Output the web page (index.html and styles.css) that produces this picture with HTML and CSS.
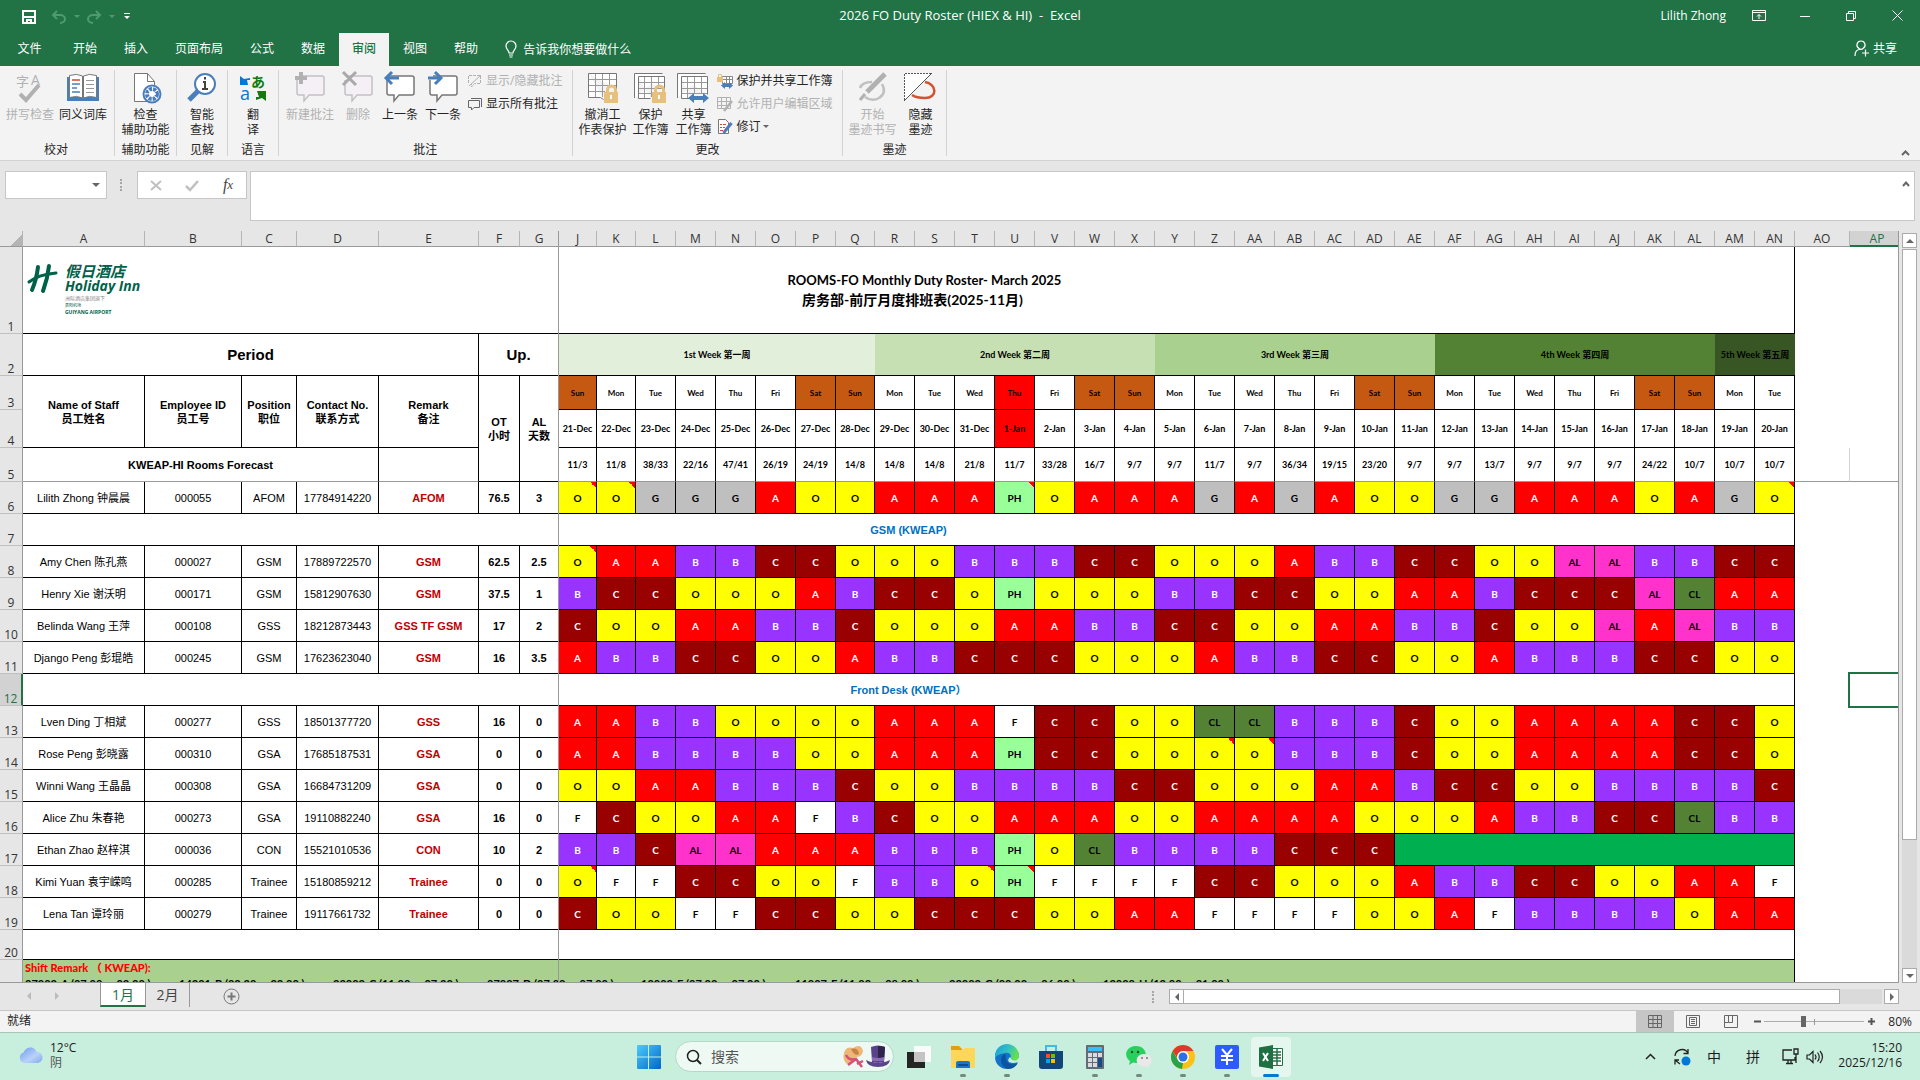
FILE: index.html
```html
<!DOCTYPE html>
<html lang="zh-CN">
<head>
<meta charset="utf-8">
<title>2026 FO Duty Roster (HIEX &amp; HI) - Excel</title>
<meta name="viewport" content="width=device-width, initial-scale=1">
<link rel="stylesheet" href="styles.css">
</head>
<body>
<header class="titlebar">
  <div class="quick">
    <button class="quick-save" aria-label="保存"><svg width="14" height="14" viewBox="0 0 14 14"><path fill="none" stroke="#fff" stroke-width="2" d="M1 1h12v12H1zM2 7h10"/><path fill="#fff" d="M4 9h6v4H8v-2H6v2H4z"/></svg></button>
    <button class="quick-undo" aria-label="撤消"><svg width="16" height="14" viewBox="0 0 16 14"><path fill="none" stroke="#4f9a70" stroke-width="2" d="M6 1L2 5l4 4M2 5h7c3 0 5 2 5 4s-2 4-5 4"/></svg><i class="tri"></i></button>
    <button class="quick-undo" aria-label="重做"><svg width="16" height="14" viewBox="0 0 16 14"><path fill="none" stroke="#4f9a70" stroke-width="2" d="M10 1l4 4-4 4M14 5H7C4 5 2 7 2 9s2 4 5 4"/></svg><i class="tri"></i></button>
    <button class="quick-more" aria-label="自定义"><svg width="6" height="7" viewBox="0 0 6 7"><path fill="#fff" d="M0 0h6v1H0zM0 3h6L3 6z"/></svg></button>
  </div>
  <h1 class="doc-title">2026 FO Duty Roster (HIEX &amp; HI)&nbsp; -&nbsp; Excel</h1>
  <div class="window-tools">
    <span class="user">Lilith Zhong</span>
    <button aria-label="功能区显示选项"><svg width="14" height="11" viewBox="0 0 14 11"><path fill="none" stroke="#fff" d="M.5.5h13v10H.5zM0 2.500h14M7 9V4.500M5 6.500l2-2 2 2"/></svg></button>
    <button aria-label="最小化"><svg width="10" height="10" viewBox="0 0 10 10"><path stroke="#fff" d="M0 5.500h10"/></svg></button>
    <button aria-label="还原"><svg width="10" height="10" viewBox="0 0 10 10"><path fill="none" stroke="#fff" d="M.5 2.500h7v7h-7zM2.500 2V.5h7v7H8"/></svg></button>
    <button aria-label="关闭"><svg width="11" height="11" viewBox="0 0 11 11"><path stroke="#fff" d="M.5.5l10 10M10.500.5l-10 10"/></svg></button>
  </div>
</header>
<nav class="tabs">
  <button class="tab tab-file">文件</button><button class="tab">开始</button><button class="tab">插入</button><button class="tab">页面布局</button><button class="tab">公式</button><button class="tab">数据</button><button class="tab tab-active">审阅</button><button class="tab">视图</button><button class="tab">帮助</button>
  <button class="tell-me"><svg width="12" height="17" viewBox="0 0 12 17"><path fill="none" stroke="#fff" stroke-width="1.200" d="M4 12c0-3-3-3.500-3-7a5 5 0 0 1 10 0c0 3.500-3 4-3 7zM4 14h4M4.500 16h3"/></svg>告诉我你想要做什么</button>
  <button class="share"><svg width="15" height="17" viewBox="0 0 15 17"><path fill="none" stroke="#fff" stroke-width="1.200" d="M7 1a4 4 0 0 1 2 7.500c-1 .8-3 .8-4 0A4 4 0 0 1 7 1zM1 16c0-4 2-6.500 5-6.500M8 13h7M11.500 9.500v7"/></svg>共享</button>
</nav>
<section class="ribbon" aria-label="审阅">
  <div class="group group-wide group-first">
    <div class="tools">
      <button class="big w54" disabled><svg width="32" height="32" viewBox="0 0 32 32"><text x="2" y="14" font-size="13" fill="#b1b1b1">字</text><text x="17" y="13" font-size="14" fill="#b1b1b1">A</text><path fill="none" stroke="#b1b1b1" stroke-width="4" d="M6 22l6 6 13-15"/></svg>拼写检查</button>
      <button class="big w52"><svg width="32" height="32" viewBox="0 0 32 32"><path fill="#4a7ebb" d="M0 5h3v20h26V5h3v24H0z"/><path fill="#fff" stroke="#777" d="M2.500 3.500Q10 1 15.500 4v22Q10 23 2.500 25.500zM29.500 3.500Q22 1 16.500 4v22q5.500-3 13-.5z"/><path stroke="#cf4b32" stroke-width="1.500" d="M5 8h8"/><path stroke="#4a7ebb" stroke-width="1.500" d="M5 12h8M5 16h5M5 20h8"/><path stroke="#999" d="M19 8.500h8M19 12.500h8M19 16.500h8M19 20.500h8"/></svg>同义词库</button>
    </div><h2>校对</h2>
  </div>
  <div class="group"><div class="tools">
      <button class="big w61"><svg width="32" height="32" viewBox="0 0 32 32"><path fill="#fff" stroke="#777" d="M4.500 1.500h13l7 8v20h-20z"/><path fill="none" stroke="#777" d="M17.500 1.500v8h7"/><circle cx="22" cy="22" r="8.500" fill="#fff" stroke="#4a7ebb" stroke-width="2"/><circle cx="22" cy="22" r="5" fill="none" stroke="#4a7ebb" stroke-width="4" stroke-dasharray="3 1"/><path fill="none" stroke="#fff" stroke-width="1.500" d="M19 19l3 3h4"/></svg>检查<br>辅助功能</button>
    </div><h2>辅助功能</h2></div>
  <div class="group"><div class="tools">
      <button class="big w50"><svg width="32" height="32" viewBox="0 0 32 32"><path stroke="#4a7ebb" stroke-width="5" d="M12 19L3 28"/><circle cx="19" cy="12" r="10" fill="#fff" stroke="#4a7ebb" stroke-width="2"/><path fill="none" stroke="#444" stroke-width="2" d="M17 10h2v7M16 17h6M19 5v2.500"/></svg>智能<br>查找</button>
    </div><h2>见解</h2></div>
  <div class="group"><div class="tools">
      <button class="big w50"><svg width="32" height="32" viewBox="0 0 32 32"><path fill="#0078d7" d="M3 4l4 3 6-1v2h-3l1 5H3z"/><path fill="#107c10" d="M29 29l-4-3-6 2v-3h3l-2-6h9z"/><text x="14" y="15" font-size="14" font-weight="bold" fill="#107c10">あ</text><text x="3" y="28" font-size="18" fill="#0078d7">a</text></svg>翻<br>译</button>
    </div><h2>语言</h2></div>
  <div class="group group-wide">
    <div class="tools">
      <button class="big w56" disabled><svg width="32" height="32" viewBox="0 0 32 32"><path fill="#f4f0f6" stroke="#c4c0c6" stroke-width="1.500" d="M6 4h22q2 0 2 2v15q0 2-2 2H15l-5 6v-6H5q-2 0-2-2V8"/><path stroke="#b1b1b1" stroke-width="4" d="M7 0v12M1 6h12"/></svg>新建批注</button>
      <button class="big w40" disabled><svg width="32" height="32" viewBox="0 0 32 32"><path fill="#f4f0f6" stroke="#c4c0c6" stroke-width="1.500" d="M6 4h22q2 0 2 2v15q0 2-2 2H15l-5 6v-6H5q-2 0-2-2V8"/><path stroke="#a9a9a9" stroke-width="3" d="M1 0l13 13M14 0L1 13"/></svg>删除</button>
      <button class="big w44"><svg width="32" height="32" viewBox="0 0 32 32"><path fill="#fff" stroke="#777" stroke-width="1.500" d="M6 4h22q2 0 2 2v15q0 2-2 2H15l-5 6v-6H5q-2 0-2-2V8"/><path fill="none" stroke="#4a7ebb" stroke-width="3" d="M8 0L2 6l6 6M3 6h12"/></svg>上一条</button>
      <button class="big w42"><svg width="32" height="32" viewBox="0 0 32 32"><path fill="#fff" stroke="#777" stroke-width="1.500" d="M6 4h22q2 0 2 2v15q0 2-2 2H15l-5 6v-6H5q-2 0-2-2V8"/><path fill="none" stroke="#4a7ebb" stroke-width="3" d="M8 0l6 6-6 6M1 6h12"/></svg>下一条</button>
      <div class="stack">
        <button class="small" disabled><svg width="16" height="16" viewBox="0 0 16 16"><path fill="none" stroke="#b1b1b1" d="M1.500 10V2.500h12v8h-6L4.500 14v-3" stroke-dasharray="3 1"/><path stroke="#b1b1b1" d="M2 13L14 2"/></svg>显示/隐藏批注</button>
        <button class="small"><svg width="16" height="16" viewBox="0 0 16 16"><path fill="none" stroke="#666" d="M4 2.500h10.500V11M2 4.500h10.500v7H7L4.500 14v-2.500H1.500v-7z"/></svg>显示所有批注</button>
      </div>
    </div><h2>批注</h2>
  </div>
  <div class="group group-wide">
    <div class="tools">
      <button class="big w52"><svg width="32" height="32" viewBox="0 0 32 32"><path fill="#fff" stroke="#777" d="M2.500 1.500h28v16M2.500 1.500v24h12l3 2"/><path stroke="#999" d="M9.500 2v23M16.500 2v23M23.500 2v14M3 7.500h27M3 13.500h27M3 19.500h16"/><path fill="none" stroke="#e8c07d" stroke-width="3" d="M21.500 22v-4a4 4 0 0 1 8 0v4"/><path fill="#e8c07d" d="M18 20h14v11H18z"/><path stroke="#fff" stroke-width="2" d="M25 23v4"/></svg>撤消工<br>作表保护</button>
      <button class="big w44"><svg width="32" height="32" viewBox="0 0 32 32"><path fill="#fff" stroke="#777" d="M.5 26V1.500h28M4.500 4.500h26v14M4.500 4.500v22h12"/><path stroke="#999" d="M10.500 5v21M17.500 5v20M24.500 5v12M5 10.500h25M5 16.500h25M5 21.500h14"/><path fill="none" stroke="#e8c07d" stroke-width="3" d="M21.500 22v-4a4 4 0 0 1 8 0v4"/><path fill="#e8c07d" d="M18 20h14v11H18z"/><path stroke="#fff" stroke-width="2" d="M25 23v4"/></svg>保护<br>工作簿</button>
      <button class="big w42"><svg width="32" height="32" viewBox="0 0 32 32"><path fill="#fff" stroke="#777" d="M.5 26V1.500h28M4.500 4.500h26v18M4.500 4.500v22h8"/><path stroke="#999" d="M10.500 5v21M17.500 5v17M24.500 5v17M5 10.500h25M5 16.500h25M5 21.500h25"/><path fill="#4a7ebb" d="M11 26l6-5v3h9v-3l6 5-6 5v-3h-9v3z"/></svg>共享<br>工作簿</button>
      <div class="stack">
        <button class="small"><svg width="16" height="16" viewBox="0 0 16 16"><path fill="#fff" stroke="#888" d="M5.500 3.500h10v7h-10zM9.500 3v8M12.500 3v8M5 6.500h10"/><path fill="#e8c07d" d="M0 4h6v5H0z"/><path fill="none" stroke="#e8c07d" d="M1.500 4V1.500h3V4"/><path fill="#4a7ebb" d="M4 12.500L8 9v2h4V9l4 3.500L12 16v-2H8v2z"/></svg>保护并共享工作簿</button>
        <button class="small" disabled><svg width="16" height="16" viewBox="0 0 16 16"><path fill="none" stroke="#b1b1b1" d="M.5 1.500h13v11H.5zM4.500 1v11M9.500 1v11M0 5.500h14M0 9.500h13"/><path stroke="#b1b1b1" stroke-width="2.500" d="M15 5l-8 10"/></svg>允许用户编辑区域</button>
        <button class="small"><svg width="16" height="16" viewBox="0 0 16 16"><path fill="#fff" stroke="#777" d="M1.500.5h7l3 3v11h-10z"/><path stroke="#cf4b32" d="M3 5.500h2M6 5.500h3M3 8.500h2M6 8.500h2M3 11.500h3"/><path stroke="#4a7ebb" stroke-width="3" d="M14.500 4l-8 10"/></svg>修订<i class="tri tri-dark"></i></button>
      </div>
    </div><h2>更改</h2>
  </div>
  <div class="group group-wide">
    <div class="tools">
      <button class="big w52" disabled><svg width="32" height="32" viewBox="0 0 32 32"><path fill="none" stroke="#c0c0c0" stroke-width="2.500" d="M4 16q2-6 12-6M26 12q5 9-3 14-7 4-14-1"/><path fill="none" stroke="#b1b1b1" stroke-width="5" d="M29 2L11 20"/><path stroke="#b1b1b1" stroke-width="3" d="M9 22l-5 6"/></svg>开始<br>墨迹书写</button>
      <button class="big w44"><svg width="32" height="32" viewBox="0 0 32 32"><path fill="none" stroke="#d35230" stroke-width="2.500" d="M21 10c12 2 13 16 0 16-7 0-10-1-13-3"/><path fill="#fff" d="M0 1h28L0 29z"/><path fill="none" stroke="#555" stroke-dasharray="2 1" d="M.5 28V1.500H28"/><path stroke="#555" d="M28 1L0 29"/></svg>隐藏<br>墨迹</button>
    </div><h2>墨迹</h2>
  </div>
  <button class="collapse" aria-label="折叠功能区"><svg width="9" height="6" viewBox="0 0 9 6"><path fill="none" stroke="#666" stroke-width="2" d="M1 5l3.500-3.500L8 5"/></svg></button>
</section>
<section class="formula-bar">
  <div class="name-box"><input aria-label="名称框"><i class="tri tri-dark"></i></div>
  <span class="grip"></span>
  <div class="fx-box">
    <button aria-label="取消"><svg width="12" height="11" viewBox="0 0 12 11"><path stroke="#c0c0c0" stroke-width="2" d="M1 1l10 9M11 1L1 10"/></svg></button>
    <button aria-label="输入"><svg width="14" height="11" viewBox="0 0 14 11"><path fill="none" stroke="#c0c0c0" stroke-width="2.500" d="M1 6l4 4 8-9"/></svg></button>
    <button class="fx" aria-label="插入函数">f<small>x</small></button>
  </div>
  <div class="formula"><textarea aria-label="编辑栏"></textarea><button aria-label="折叠编辑栏"><svg width="8" height="6" viewBox="0 0 8 6"><path fill="none" stroke="#666" stroke-width="2" d="M1 5l3-3.500L7 5"/></svg></button></div>
</section>
<main class="workspace">
  <div class="sheet">
    <table class="grid" id="roster"></table>
    <div class="logo">
      <svg width="31" height="29" viewBox="0 0 31 29"><path fill="none" stroke="#006149" stroke-linecap="round" d="M11 3C10 11 8 19 5 26" stroke-width="4"/><path fill="none" stroke="#006149" stroke-linecap="round" d="M22 2C21 11 19 19 16 27" stroke-width="4"/><path fill="none" stroke="#006149" stroke-linecap="round" d="M2 18C9 12 19 10 29 9" stroke-width="3"/></svg>
      <div class="logo-text"><b>假日酒店</b><b class="logo-en">Holiday Inn</b><span>洲际酒店集团旗下</span><small>贵阳机场</small><small class="logo-city">GUIYANG AIRPORT</small></div>
    </div>
    <i class="freeze"></i>
  </div>
  <div class="vscroll"><button aria-label="向上"><i class="up"></i></button><div class="vthumb"></div><div class="vtrack"></div><button aria-label="向下"><i class="down"></i></button></div>
</main>
<div class="sheet-bar">
  <button class="nav-arrow" aria-label="上一张"><i class="left"></i></button><button class="nav-arrow" aria-label="下一张"><i class="right"></i></button>
  <div class="sheet-tabs"><button class="sheet-tab sheet-on">1月</button><button class="sheet-tab">2月</button></div>
  <button class="add-sheet" aria-label="新工作表"><svg width="17" height="17" viewBox="0 0 17 17"><circle cx="8.500" cy="8.500" r="7.500" fill="none" stroke="#777"/><path stroke="#777" stroke-width="2" d="M8.500 4.500v8M4.500 8.500h8"/></svg></button>
  <span class="grip grip-end"></span>
  <div class="hscroll"><button aria-label="向左"><i class="left"></i></button><div class="hthumb"></div><div class="htrack"></div><button aria-label="向右"><i class="right"></i></button></div>
</div>
<div class="status">
  <span class="ready">就绪</span>
  <button class="view view-on" aria-label="普通"><svg width="14" height="13" viewBox="0 0 14 13"><path fill="none" stroke="#666" d="M.5.5h13v12H.5zM5 0v13M9.500 0v13M0 4.500h14M0 8.500h14"/></svg></button>
  <button class="view" aria-label="页面布局"><svg width="14" height="13" viewBox="0 0 14 13"><path fill="none" stroke="#666" d="M.5.5h13v12H.5zM3.500 2.500h7v8h-7zM5 4.500h4M5 6.500h4M5 8.500h4"/></svg></button>
  <button class="view" aria-label="分页预览"><svg width="14" height="13" viewBox="0 0 14 13"><path fill="none" stroke="#666" d="M.5.5h13v12H.5zM4.500 0v7.500H0M8.500 0v7.500h-4"/></svg></button>
  <button class="zoom-btn" aria-label="缩小"><svg width="7" height="7" viewBox="0 0 7 7"><path stroke="#555" stroke-width="2" d="M0 3.500h7"/></svg></button>
  <input class="zoom" type="range" min="0" max="100" value="39" aria-label="显示比例">
  <button class="zoom-btn" aria-label="放大"><svg width="7" height="7" viewBox="0 0 7 7"><path stroke="#555" stroke-width="2" d="M0 3.500h7M3.500 0v7"/></svg></button>
  <span class="percent">80%</span>
</div>
<footer class="taskbar">
  <div class="weather">
    <svg width="25" height="17" viewBox="0 0 25 17"><defs><linearGradient id="cloud" x1="0" y1="0" x2="1" y2="1"><stop offset="0" stop-color="#6d9cec"/><stop offset=".6" stop-color="#b9d2fa"/><stop offset="1" stop-color="#7fa6ec"/></linearGradient></defs><path fill="url(#cloud)" d="M6 16a5.500 5.500 0 0 1-.5-10.500C7 2 9.500.5 12.500.5c4 0 5.500 2.500 6 4.500 4 0 6 2.500 6 5.500S22 16 19 16z"/></svg>
    <div>12°C<br><span>阴</span></div>
  </div>
  <div class="apps">
    <button class="app" aria-label="开始"><svg width="24" height="24" viewBox="0 0 24 24"><defs><linearGradient id="win" x1="0" y1="0" x2="1" y2="1"><stop offset="0" stop-color="#4ccbfb"/><stop offset="1" stop-color="#0067c8"/></linearGradient></defs><path fill="url(#win)" d="M0 1q0-1 1-1h10v11.500H0zM12 0h11q1 0 1 1v10.500H12zM0 12.500h11V24H1q-1 0-1-1zM12 12.500h12V23q0 1-1 1H12z"/></svg></button>
    <label class="search"><svg width="16" height="16" viewBox="0 0 16 16"><circle cx="7" cy="7" r="5.500" fill="none" stroke="#222" stroke-width="1.500"/><path stroke="#222" stroke-width="2" d="M11 11l4 4"/></svg><input type="text" placeholder="搜索" aria-label="搜索">
      <svg width="48" height="24" viewBox="0 0 48 24"><path fill="#edb877" d="M2 8Q4 1 11 3q8-5 10 3-1 6-7 6-4 6-9 7-5-4-3-11z"/><path fill="#c98144" d="M9 4q7-2 8 5-4 3-8-5z"/><path fill="none" stroke="#d65078" stroke-width="2.500" d="M4 10q3 6 10 4M6 20l8-6 6 8M15 19l6-3"/><path fill="#58438a" d="M29 2q7-3 14 0l-1 15H30z"/><path fill="#2f244b" d="M36 1q4 0 7 1l-1 14h-6z"/><path fill="#8c6bb5" d="M30 12q6 2 12 0v4H30z"/><path fill="#5a458b" d="M24 15q5 3 12 2 7 1 12-2-1 7-12 7t-12-7z"/></svg></label>
    <button class="app" aria-label="任务视图"><svg width="24" height="24" viewBox="0 0 24 24"><path fill="#242424" d="M0 7h18v16H0z"/><path fill="#fafafa" d="M7 1h17v16H7z"/><path fill="#c4c4c4" d="M7 7h11v10H7z"/></svg></button>
    <button class="app run" aria-label="文件资源管理器"><svg width="26" height="24" viewBox="0 0 26 24"><path fill="#e0a012" d="M1 1h8l3 3v6H1z"/><path fill="#ffd65c" d="M1 5h11l3-2h10v20H1z"/><path fill="#1976c9" d="M6 23v-5q0-2 2-2h10q2 0 2 2v5z"/><path fill="#0c4d91" d="M8 19h10v2H8z"/></svg></button>
    <button class="app run" aria-label="Edge"><svg width="24" height="24" viewBox="0 0 24 24"><defs><linearGradient id="edge" x1="0" y1="0" x2="1" y2=".4"><stop offset="0" stop-color="#189bdc"/><stop offset=".6" stop-color="#35c2c0"/><stop offset="1" stop-color="#66de50"/></linearGradient></defs><circle cx="12" cy="12" r="12" fill="#1173c9"/><path fill="url(#edge)" d="M0 11A12 12 0 0 1 24 11c0 5-4 6-7 6s-4-2-2-4 0-6-5-5S1 10 0 14z"/><path fill="#0b55a0" d="M9 9c-5 3-4 13 4 15 5 0 8-3 10-6-5 3-14 1-12-8z"/><path fill="#c8eedd" d="M15 12q-3 3-1 5 4 2 9 0v2l2-8-3 4q-5 2-7-3z"/></svg></button>
    <button class="app" aria-label="Microsoft Store"><svg width="24" height="24" viewBox="0 0 24 24"><path fill="none" stroke="#43b8ee" stroke-width="2" d="M7 6V1h10v5"/><path fill="#124678" d="M0 6h24v15q0 3-3 3H3q-3 0-3-3z"/><path fill="#f25022" d="M7 9h4v4H7z"/><path fill="#7fba00" d="M12 9h4v4h-4z"/><path fill="#00a4ef" d="M7 14h4v4H7z"/><path fill="#ffb900" d="M12 14h4v4h-4z"/></svg></button>
    <button class="app run" aria-label="计算器"><svg width="20" height="24" viewBox="0 0 20 24"><rect width="18" height="24" x="1" rx="1" fill="#626b76"/><path fill="#38c0f4" d="M3 2h14v4H3z"/><path fill="#d8dbe0" d="M3 8h4v4H3zM8 8h4v4H8zM13 8h4v4h-4zM3 13h4v4H3zM8 13h4v4H8zM3 18h4v4H3zM8 18h4v4H8z"/><path fill="#174b86" d="M13 13h4v9h-4z"/></svg></button>
    <button class="app run" aria-label="微信"><svg width="26" height="22" viewBox="0 0 26 22"><path fill="#28d05e" d="M10 0c13 0 13 17 0 17l-3-.5L3 19l1-4C-3 10 0 0 10 0z"/><circle cx="6" cy="6" r="1.200" fill="#174b2c"/><circle cx="12" cy="6" r="1.200" fill="#174b2c"/><path fill="#e9e9e9" d="M18 8c9 0 10 9 4 12l1 2-3-1.500c-12 1-12-12.500-2-12.500z"/><circle cx="16" cy="12" r="1" fill="#777"/><circle cx="21" cy="12" r="1" fill="#777"/></svg></button>
    <button class="app run" aria-label="Chrome"><svg width="24" height="24" viewBox="0 0 24 24"><circle cx="12" cy="12" r="12" fill="#fbc116"/><path fill="#de3a2b" d="M1.600 6A12 12 0 0 1 22.400 6H12L7 14z"/><path fill="#2aa24c" d="M1.600 6L7 15l5 3-1 6A12 12 0 0 1 1.600 6z"/><circle cx="12" cy="12" r="6" fill="#fff"/><circle cx="12" cy="12" r="4.500" fill="#2b70e4"/></svg></button>
    <button class="app run" aria-label="财务"><svg width="24" height="24" viewBox="0 0 24 24"><rect width="24" height="24" rx="2" fill="#2d5bff"/><path fill="none" stroke="#fff" stroke-width="2" d="M7 4l5 6 5-6M6 11h12M6 15h12M12 10v10"/></svg></button>
    <button class="app app-on" aria-label="Excel"><svg width="24" height="24" viewBox="0 0 24 24"><path fill="#fff" stroke="#217346" d="M12 3.500h11.500v17H12z"/><path stroke="#217346" stroke-width="1.500" d="M14 7h8M14 10h8M14 13h8M14 16h8M18 4v16"/><path fill="#1e6f42" d="M0 2.500L14 0v24L0 21.500z"/><path stroke="#fff" stroke-width="2" d="M4 8l5 8M9 8l-5 8"/></svg></button>
  </div>
  <div class="tray">
    <button class="t32" aria-label="显示隐藏的图标"><svg width="11" height="7" viewBox="0 0 11 7"><path fill="none" stroke="#222" stroke-width="1.500" d="M1 6l4.500-4.500L10 6"/></svg></button>
    <button class="t32" aria-label="更新"><svg width="18" height="18" viewBox="0 0 18 18"><path fill="none" stroke="#222" stroke-width="1.300" d="M2 8a7 7 0 0 1 13-3M15 1v4.500h-4.500M7 16L2 12M2 16.500V12h4"/><circle cx="13" cy="13" r="4.500" fill="#0078d7"/></svg></button>
    <button class="t32">中</button>
    <button class="t46">拼</button>
    <button class="t28" aria-label="网络"><svg width="17" height="17" viewBox="0 0 17 17"><path fill="none" stroke="#222" stroke-width="1.300" d="M10 2H1v10h12V9M4 15.500h7M6 12v3.500M9 12v3.500M12 1h4v5h-4zM14 6v9"/></svg></button>
    <button class="t22" aria-label="音量"><svg width="18" height="14" viewBox="0 0 18 14"><path fill="none" stroke="#222" stroke-width="1.200" d="M1 5h2.500L7 1.500v11L3.500 9H1zM9 4.500q2 2.500 0 5M11.500 2.500q3.500 4.500 0 9M14 1q5 6 0 12"/></svg></button>
    <div class="clock">15:20<br>2025/12/16</div>
  </div>
</footer>
<script src="roster.js"></script>
</body>
</html>
```
FILE: styles.css
```css
* { box-sizing: border-box; }
body {
  margin: 0;
  height: 100vh;
  display: flex;
  flex-direction: column;
  overflow: hidden;
  background: #e6e6e6;
  color: #262626;
  font: 12px/15px "Open Sans", "Noto Sans CJK SC", sans-serif;
}
button, input, textarea { font: inherit; color: inherit; border: 0; padding: 0; margin: 0; background: none; outline: none; }
button { display: flex; align-items: center; justify-content: center; white-space: nowrap; }
h1, h2 { margin: 0; font-size: 12px; font-weight: normal; }
svg { flex: none; display: block; overflow: visible; }

/* small triangles */
.tri, .up, .down, .left, .right { display: block; width: 0; height: 0; border: 4px solid transparent; }
.tri { border-width: 3px 3px 0; border-top-color: #4f9a70; }
.tri-dark { border-width: 4px 4px 0; border-top-color: #666; }
.up { border-width: 0 4px 4px; border-bottom-color: #666; }
.down { border-width: 4px 4px 0; border-top-color: #666; }
.left { border-width: 4px 4px 4px 0; border-right-color: #666; }
.right { border-width: 4px 0 4px 4px; border-left-color: #666; }

/* title bar */
.titlebar {
  flex: none;
  display: grid;
  grid-template-columns: 1fr auto 1fr;
  align-items: center;
  height: 33px;
  padding-bottom: 2px;
  background: #217346;
  color: #fff;
}
.doc-title { font-size: 13px; }
.quick { display: flex; align-items: center; padding: 2px 0 0 22px; }
.quick-undo { gap: 7px; width: 35px; }
.quick-save { margin-right: 12px; }
.quick-more { margin-left: 6px; }
.window-tools { display: flex; justify-content: flex-end; align-items: center; }
.window-tools button { width: 46px; height: 30px; }
.user { margin-right: 10px; }

/* ribbon tabs */
.tabs { flex: none; display: flex; align-items: stretch; gap: 1px; height: 33px; background: #217346; color: #fff; }
.tab { padding: 0 13px 2px; }
.tab-file { width: 59px; }
.tab-active { background: #f3f3f3; color: #217346; font-weight: 500; }
.tell-me { gap: 6px; margin-left: 13px; }
.share { gap: 4px; margin: 0 23px 2px auto; }

/* ribbon */
.ribbon { flex: none; display: flex; height: 95px; padding: 4px 0; background: #f3f3f3; border-bottom: 1px solid #d2d2d2; }
.group { display: flex; flex-direction: column; border-right: 1px solid #d2d2d2; }
.group-wide { padding: 0 4px 0 3px; }
.group-first { padding-right: 5px; }
.group h2 { margin-top: auto; text-align: center; line-height: 13px; }
.tools { display: flex; align-items: flex-start; }
.big { flex-direction: column; justify-content: flex-start; gap: 3px; padding-top: 2px; text-align: center; }
.big:disabled, .small:disabled { color: #b1b1b1; }
.w40 { width: 40px; } .w42 { width: 42px; } .w44 { width: 44px; } .w50 { width: 50px; }
.w52 { width: 52px; } .w54 { width: 54px; } .w56 { width: 56px; } .w61 { width: 61px; }
.stack { display: flex; flex-direction: column; align-items: flex-start; padding: 0 6px 0 3px; }
.small { gap: 3px; height: 23px; padding-bottom: 2px; }
.small .tri { border-width: 3px 3px 0; }
.collapse { align-self: flex-end; margin: 0 10px 0 auto; }

/* formula bar */
.formula-bar { flex: none; display: flex; align-items: flex-start; height: 70px; padding: 10px 5px 10px; }
.name-box, .fx-box, .formula { display: flex; background: #fff; border: 1px solid #c6c6c6; }
.name-box { width: 102px; height: 28px; align-items: center; padding-right: 6px; }
.name-box input { flex: 1; min-width: 0; }
.grip { width: 3px; height: 12px; margin: 8px 14px 0 13px; border-left: 2px dotted #a6a6a6; }
.fx-box { width: 110px; height: 28px; }
.fx-box button { flex: 1; }
.fx-box .fx { font: italic 16px "Liberation Serif", serif; color: #444; }
.fx small { font-size: 13px; }
.formula { flex: 1; height: 50px; margin-left: 3px; }
.formula textarea { flex: 1; resize: none; }
.formula button { width: 16px; height: 24px; }

/* worksheet */
.workspace { flex: 1; min-height: 0; display: flex; }
.sheet { position: relative; flex: 1; min-width: 0; overflow: hidden; border-right: 1px solid #999; border-bottom: 1px solid #999;
  background: linear-gradient(#e6e6e6 16px, #fff 16px); }
.grid { width: 0; table-layout: fixed; border-collapse: separate; border-spacing: 0; color: #000; font: 11px/14px "Liberation Sans", "Noto Sans CJK SC", sans-serif; }
.grid td, .grid th { padding: 0; text-align: center; vertical-align: middle; white-space: nowrap; }
.grid td { background: #fff; border-right: 1px solid #000; border-bottom: 1px solid #000; }
.grid thead th {
  height: 16px; font: 12px/13px "Open Sans", sans-serif; color: #333; background: #e6e6e6;
  border-right: 1px solid #b5b5b5; border-bottom: 1px solid #999;
}
.grid thead .corner { background: linear-gradient(135deg, transparent 68%, #b5b5b5 68%); }
.grid thead .col-on { background: #d2d2d2; color: #217346; border-bottom: 2px solid #217346; }
.grid tbody th { vertical-align: bottom; font: 12px/13px "Open Sans", sans-serif; color: #333; background: #e6e6e6; border-right: 1px solid #999; border-bottom: 1px solid #c0c0c0; }
.grid tbody .row-on { background: #d2d2d2; color: #217346; border-right: 2px solid #217346; }
.col-num { width: 23px; } .col-a { width: 122px; } .col-b { width: 97px; } .col-c, .col-out { width: 55px; } .col-d { width: 82px; }
.col-e { width: 100px; } .col-f { width: 41px; } .col-g, .col-k { width: 39px; } .col-j { width: 38px; } .col-day { width: 40px; }
.h-title { height: 87px; } .h-week { height: 42px; } .h-day { height: 34px; } .h-date { height: 38px; } .h-row { height: 32px; } .h-last { height: 30px; }
.grid .blank { border-color: transparent; }
.grid .tick { border-right-color: #d4d4d4; }
.grid .frozen td { border-bottom-color: #999; }
.grid .title { font: bold 13px/20px Lato, "Noto Sans CJK SC", sans-serif; }
.title p { margin: 0; }
.title-en { padding-left: 32px; }
.title-zh { padding-left: 8px; font-size: 14px; }
.grid .period { font-weight: bold; font-size: 15px; }
.grid .head { font-weight: bold; }
.grid .bold { font-weight: bold; }
.grid .remark { font-weight: bold; color: #c00000; }
.grid .section { font-weight: bold; color: #0070c0; }
.grid .week { font: bold 9px/14px Lato, "Noto Sans CJK SC", sans-serif; border-right: 0; }
.grid .day { font: bold 8px/12px Lato, sans-serif; }
.grid .date { font: bold 9px/12px Lato, sans-serif; }
.grid .weekend { background: #c65911; }
.grid .holiday { background: #f00; }
.w1 { --c: #e2efda; } .w2 { --c: #c6e0b4; } .w3 { --c: #a9d08e; } .w4 { --c: #548235; } .w5 { --c: #375623; }
.grid .week { background: var(--c); }
.grid .shift { font: bold 10px/12px Lato, sans-serif; }
.grid .sO { background: #ff0; }
.grid .sA { background: #f00; color: #fff; }
.grid .sB { background: #93f; color: #fff; }
.grid .sC { background: #900; color: #fff; }
.grid .sG { background: #bfbfbf; }
.grid .sPH { background: #9f9; }
.grid .sAL { background: #f3c; }
.grid .sCL { background: #548235; }
.grid .note { background-image: linear-gradient(45deg, transparent 50%, #f00 50%); background-size: 6px 6px; background-position: right top; background-repeat: no-repeat; }
.grid .leave { background: #00b050; }
.grid .cursor { outline: 2px solid #217346; border-color: #fff; }
.grid .legend { height: 60px; padding: 0 2px; text-align: left; vertical-align: top; background: #a9d08e; font: bold 11px/16px Lato, "Noto Sans CJK SC", sans-serif; }
.legend b { color: #f00; }
.legend ul { display: flex; margin: 0; padding: 0; list-style: none; }
.legend li { width: 154px; }
.freeze { position: absolute; left: 558px; top: 0; bottom: 0; width: 1px; background: #999; }
.logo { position: absolute; left: 27px; top: 33px; display: flex; gap: 7px; color: #006149; }
.logo-text { display: flex; flex-direction: column; font: 14px/16px "Open Sans", "Noto Sans CJK SC", sans-serif; }
.logo-text b:first-child { font-size: 15px; line-height: 14px; font-style: italic; }
.logo-text .logo-en { font-style: italic; line-height: 16px; }
.logo-text span { font-size: 5px; line-height: 9px; color: #888; }
.logo-text small { font-size: 4px; line-height: 6px; }
.logo-text .logo-city { font-size: 5px; font-weight: bold; }

/* scroll bars */
.vscroll { flex: none; display: flex; flex-direction: column; width: 21px; padding: 2px 3px 0; }
.vscroll button { flex: none; height: 15px; background: #fff; border: 1px solid #ababab; }
.vthumb { flex: 590; margin-top: 1px; background: #fff; border: 1px solid #ababab; }
.vtrack { flex: 128; background: #dadada; }
.hscroll { display: flex; width: 730px; height: 15px; margin: 6px 21px 0 0; }
.hscroll button { flex: none; width: 15px; background: #fff; border: 1px solid #ababab; }
.hthumb { flex: 657; background: #fff; border: 1px solid #ababab; border-left: 0; }
.htrack { flex: 42; margin-right: 2px; background: #dadada; }

/* sheet tabs */
.sheet-bar { flex: none; display: flex; height: 28px; border-bottom: 1px solid #c6c6c6; }
.nav-arrow { width: 28px; height: 25px; }
.nav-arrow:first-child { margin-left: 15px; }
.nav-arrow .left { border-right-color: #bbb; }
.nav-arrow .right { border-left-color: #bbb; }
.sheet-tabs { display: flex; height: 24px; margin-left: 29px; }
.sheet-tab { width: 44px; padding-bottom: 2px; font-size: 14px; color: #444; border-right: 1px solid #999; }
.sheet-on { width: 46px; padding: 0; color: #217346; background: #fff; border-left: 1px solid #999; border-bottom: 2px solid #217346; }
.add-sheet { width: 17px; height: 26px; margin-left: 33px; }
.grip-end { margin: 8px 14px 0 auto; }

/* status bar */
.status { flex: none; display: flex; align-items: center; height: 22px; background: #f3f3f3; border-bottom: 1px solid #a9c4b8; }
.ready { margin: 0 auto 2px 7px; }
.view { width: 38px; height: 21px; }
.view-on { background: #c6c6c6; }
.zoom-btn { width: 14px; height: 20px; }
.zoom { appearance: none; width: 100px; height: 12px; background:
  linear-gradient(#999, #999) 50% 50% / 1px 6px no-repeat,
  linear-gradient(#ababab, #ababab) 0 50% / 100% 1px no-repeat; }
.zoom::-webkit-slider-thumb { appearance: none; width: 5px; height: 11px; background: #666; }
.percent { width: 33px; margin: 0 8px 0 1px; text-align: right; }

/* taskbar */
.taskbar { flex: none; display: grid; grid-template-columns: 1fr auto 1fr; align-items: center; height: 47px; background: #c8eedd; color: #1c1c1c; }
.weather { display: flex; align-items: center; gap: 7px; padding: 0 0 3px 18px; }
.weather span { color: #555; }
.apps { display: flex; align-items: center; }
.app { position: relative; width: 40px; height: 40px; margin: 0 2px; border-radius: 4px; }
.run::after, .app-on::after { content: ""; position: absolute; bottom: 0; width: 6px; height: 3px; border-radius: 2px; background: #74897f; }
.app-on { background: #e4f6ee; }
.app-on::after { width: 16px; background: #0078d7; }
.search { display: flex; align-items: center; width: 219px; height: 31px; margin: 0 3px 0 4px; padding: 0 3px 0 10px; border: 1px solid #b4d8c8; border-radius: 16px; background: #eef9f4; }
.search input { flex: 1; min-width: 0; padding-left: 9px; font-size: 14px; }
.search input::placeholder { color: #555; opacity: 1; }
.tray { display: flex; justify-content: flex-end; align-items: center; font-size: 14px; }
.tray button { height: 40px; }
.t22 { width: 22px; } .t28 { width: 28px; } .t32 { width: 32px; } .t46 { width: 46px; }
.clock { width: 76px; margin: 0 18px 3px 0; text-align: right; font-size: 12px; }
```
FILE: roster.js
```js
const letters = ["A","B","C","D","E","F","G","J","K","L","M","N","O","P","Q","R","S","T","U","V","W","X","Y","Z",
  "AA","AB","AC","AD","AE","AF","AG","AH","AI","AJ","AK","AL","AM","AN","AO","AP"];
const weekdays = ["Sun","Mon","Tue","Wed","Thu","Fri","Sat"];
const forecast = "11/3 11/8 38/33 22/16 47/41 26/19 24/19 14/8 14/8 14/8 21/8 11/7 33/28 16/7 9/7 9/7 11/7 9/7 36/34 19/15 23/20 9/7 9/7 13/7 9/7 9/7 9/7 24/22 10/7 10/7 10/7".split(" ");

// A trailing * marks a shift with a cell note.
const rows = {
  6: ["Lilith Zhong 钟晨晨","000055","AFOM","17784914220","AFOM","76.5","3","O* O* G G G A O O A A A PH* O A A A G A G A O O G G A A A O A G O*"],
  8: ["Amy Chen 陈孔燕","000027","GSM","17889722570","GSM","62.5","2.5","O* A A B B C C O O O B B B C C O O O A B B C C O O AL AL B B C C"],
  9: ["Henry Xie 谢沃明","000171","GSM","15812907630","GSM","37.5","1","B C C O O O A B C C O PH O O O B B C C O O A A B C C C AL CL A A"],
  10: ["Belinda Wang 王萍","000108","GSS","18212873443","GSS TF GSM","17","2","C O O A A B B C O O O A A B B C C O O A A B B C O O AL A AL B B"],
  11: ["Django Peng 彭琨皓","000245","GSM","17623623040","GSM","16","3.5","A B B C C O O A B B C C C O O O A B B C C O O A B B B C C O O"],
  13: ["Lven Ding 丁相斌","000277","GSS","18501377720","GSS","16","0","A A B B O O O O A A A F C C O O CL CL B B B C O O A A A A C C O"],
  14: ["Rose Peng 彭晓露","000310","GSA","17685187531","GSA","0","0","A A B B B B O O A A A PH C C O O O* O* B B B C O O A A A A C C O"],
  15: ["Winni Wang 王晶晶","000308","GSA","16684731209","GSA","0","0","O O A A B B B C O O B B B B C C O O O A A B C C O O B B B B C"],
  16: ["Alice Zhu 朱春艳","000273","GSA","19110882240","GSA","16","0","F C O O A A F B C O O A A A O O A A A A O O O A B B C C CL B B"],
  17: ["Ethan Zhao 赵梓淇","000036","CON","15521010536","CON","10","2","B B C AL AL A A A B B B PH O CL B B B B C C C"],
  18: ["Kimi Yuan 袁宇嵘鸣","000285","Trainee","15180859212","Trainee","0","0","O* F F C C O O F B B O* PH* F F F F C C O O O A B B C C O O A A F"],
  19: ["Lena Tan 谭玲丽","000279","Trainee","19117661732","Trainee","0","0","C O O F F C C O O C C C O O A A F F F F O O A F B B B B O A A"]
};
const legend = ["07002-A (07:00 — 03:30 )","14301-B (02:30 — 23:00 )","23002-C (11:00 — 07:30 )","07007-D (07:00 — 07:00 )",
  "10002-E (07:00 — 07:00 )","11007-F (11:00 — 08:00 )","22002-G (00:00 — 06:00 )","12000-H (12:00 — 21:00 )"];

const td = (text, cls = "", attrs = "") => `<td class="${cls}" ${attrs}>${text}</td>`;
const outside = td("", "blank") + td("", "blank");
const tr = (n, height, cells, cls = "", rest = outside) =>
  `<tr class="${height} ${cls}"><th scope="row" class="${n === 12 ? "row-on" : ""}">${n}</th>${cells}${rest}</tr>`;

const cols = ["num","a","b","c","d","e","f","g","j","k","day","day","day","day","day","k",
  ...Array(23).fill("day"), "out", "out"];

const days = forecast.map((_, i) => {
  const name = weekdays[i % 7];
  const date = i < 11 ? `${21 + i}-Dec` : `${i - 10}-Jan`;
  const tone = date === "1-Jan" ? "holiday" : "";
  return { name, date, tone, dayTone: tone || (name[0] === "S" ? "weekend" : "") };
});

function staffRow(n) {
  const [name, id, post, phone, remark, ot, al, codes] = rows[n];
  const shifts = codes.split(" ").map(code => {
    const key = code.replace("*", "");
    return td(key, `shift s${key}${key === code ? "" : " note"}`);
  });
  if (shifts.length < 31) shifts.push(td("", "leave", `colspan="${31 - shifts.length}"`));
  return tr(n, "h-row", td(name) + td(id) + td(post) + td(phone) + td(remark, "remark") + td(ot, "bold") + td(al, "bold") + shifts.join(""));
}

const all = 'colspan="38"';
const two = 'rowspan="2"';
let body = "";
body += tr(1, "h-title", td('<p class="title-en">ROOMS-FO Monthly Duty Roster- March 2025</p><p class="title-zh">房务部-前厅月度排班表(2025-11月)</p>', "title", all));
body += tr(2, "h-week", td("Period", "period", 'colspan="5"') + td("Up.", "period", 'colspan="2"')
  + td("1st Week 第一周", "week w1", 'colspan="8"') + td("2nd Week 第二周", "week w2", 'colspan="7"')
  + td("3rd Week 第三周", "week w3", 'colspan="7"') + td("4th Week 第四周", "week w4", 'colspan="7"')
  + td("5th Week 第五周", "week w5", 'colspan="2"'));
body += tr(3, "h-day", td("Name of Staff<br>员工姓名", "head", two) + td("Employee ID<br>员工号", "head", two)
  + td("Position<br>职位", "head", two) + td("Contact No.<br>联系方式", "head", two) + td("Remark<br>备注", "head", two)
  + td("OT<br>小时", "head", 'rowspan="3"') + td("AL<br>天数", "head", 'rowspan="3"')
  + days.map(d => td(d.name, `day ${d.dayTone}`)).join(""));
body += tr(4, "h-date", days.map(d => td(d.date, `date ${d.tone}`)).join(""));
body += tr(5, "h-day", td("KWEAP-HI Rooms Forecast", "head", 'colspan="4"') + td("") + forecast.map(f => td(f, "date")).join(""),
  "frozen", td("", "blank tick") + td("", "blank"));
body += staffRow(6);
body += tr(7, "h-row", td("GSM (KWEAP)", "section", all));
[8, 9, 10, 11].forEach(n => { body += staffRow(n); });
body += tr(12, "h-row", td("Front Desk (KWEAP）", "section", all), "", td("", "blank") + td("", "cursor"));
[13, 14, 15, 16, 17, 18, 19].forEach(n => { body += staffRow(n); });
body += tr(20, "h-last", td("", "", all));
body += tr("", "h-last", td(`<b>Shift Remark （ KWEAP):</b><ul>${legend.map(t => `<li>${t}</li>`).join("")}</ul>`, "legend", all));

document.getElementById("roster").innerHTML =
  `<colgroup>${cols.map(c => `<col class="col-${c}">`).join("")}</colgroup>`
  + `<thead><tr><th class="corner"></th>${letters.map(l => `<th scope="col" class="${l === "AP" ? "col-on" : ""}">${l}</th>`).join("")}</tr></thead>`
  + `<tbody>${body}</tbody>`;
```
